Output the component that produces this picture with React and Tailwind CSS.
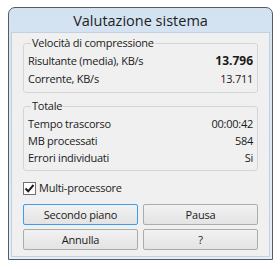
import React from "react";

const font = { fontFamily: '"Open Sans", "Liberation Sans", sans-serif' };

function Row({ label, value, bold, h }) {
  return (
    <div className={`flex items-center justify-between ${h}`}>
      <span>{label}</span>
      <span className={bold ? "font-bold text-[12px] tracking-normal" : ""}>{value}</span>
    </div>
  );
}

function Group({ title, children, className }) {
  return (
    <fieldset className={`border border-[#d5d5d5] rounded-[3px] px-[4px] ${className}`}>
      <legend className="ml-[3px] px-[1px] leading-[14px]">{title}</legend>
      {children}
    </fieldset>
  );
}

function Button({ children, focused }) {
  return (
    <button
      className={`h-[21px] rounded-[2px] border bg-gradient-to-b from-[#f2f2f2] to-[#e3e3e3] leading-none tracking-[-0.2px] ${
        focused ? "border-[#3c9cf0]" : "border-[#acacac]"
      }`}
    >
      {children}
    </button>
  );
}

export default function App() {
  return (
    <div
      className="w-[280px] h-[269px] bg-white pt-[7px] pl-[8px] text-[11px] tracking-[-0.25px] text-[#1a1a1a]"
      style={font}
    >
      <div className="w-[265px] h-[253px] flex flex-col rounded-t-[7px] border border-[#555b63] bg-gradient-to-b from-[#d3e2f1] to-[#e6eef7]">
        {/* title bar */}
        <div className="h-[24px] flex items-center justify-center text-[14.5px] tracking-normal text-[#1e1e1e] pt-[2px]">
          Valutazione sistema
        </div>

        {/* client area */}
        <div className="flex-1 mx-[2px] mb-[2px] bg-[#f0f0f0] border border-[#c3d0dd] px-[11px] pt-[3px] flex flex-col">
          <Group title="Velocità di compressione" className="pt-[2px] pb-[4px]">
            <Row label="Risultante (media), KB/s" value="13.796" bold h="h-[18px]" />
            <Row label="Corrente, KB/s" value="13.711" h="h-[18px]" />
          </Group>

          <Group title="Totale" className="mt-[6px] pt-[3px] pb-[4px]">
            <Row label="Tempo trascorso" value="00:00:42" h="h-[17px]" />
            <Row label="MB processati" value="584" h="h-[17px]" />
            <Row label="Errori individuati" value="Si" h="h-[16px]" />
          </Group>

          <label className="mt-[10px] flex items-center gap-[3px] h-[15px]">
            <span className="w-[13px] h-[13px] border border-[#707070] bg-white flex items-center justify-center">
              <svg width="11" height="11" viewBox="0 0 11 11">
                <path d="M1.5 5.5 L4.2 8.3 L9.5 2" fill="none" stroke="#1c1c1c" strokeWidth="2" />
              </svg>
            </span>
            Multi-processore
          </label>

          <div className="mt-[8px] grid grid-cols-2 gap-x-[5px] gap-y-[4px]">
            <Button focused>Secondo piano</Button>
            <Button>Pausa</Button>
            <Button>Annulla</Button>
            <Button>?</Button>
          </div>
        </div>
      </div>
    </div>
  );
}
